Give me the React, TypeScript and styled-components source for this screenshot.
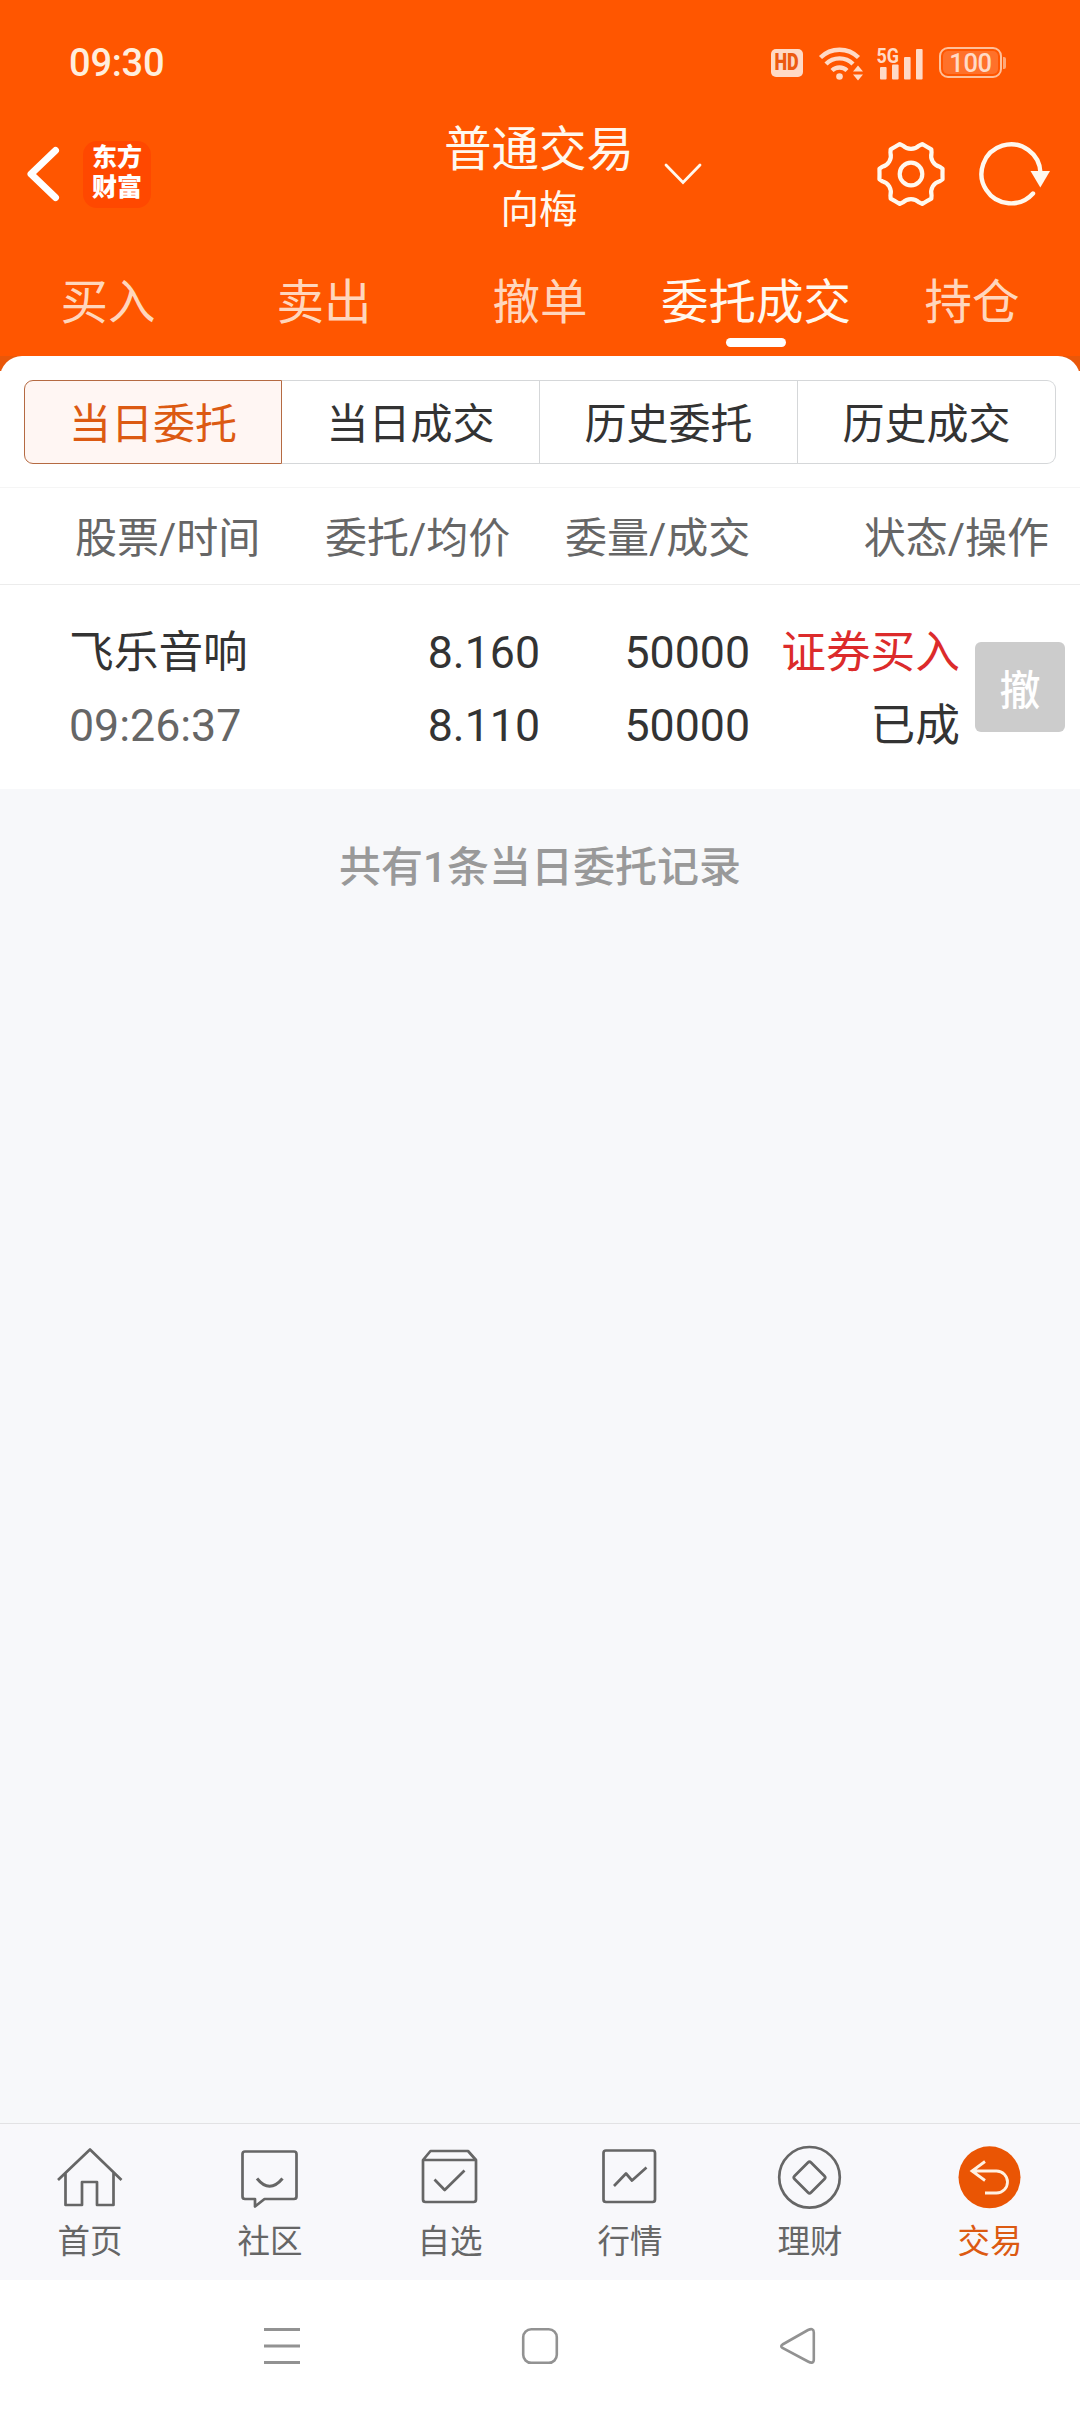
import React from 'react';
import styled, { createGlobalStyle, css } from 'styled-components';

const GlobalStyle = createGlobalStyle`
  *, *::before, *::after { box-sizing: border-box; }
  body {
    margin: 0;
    background: #f7f8fa;
    font-family: Roboto, "Noto Sans CJK SC", sans-serif;
    color: #333;
  }
  svg { display: block; flex: none; }
`;

const Screen = styled.div`
  width: 1080px;
  height: 2412px;
  display: flex;
  flex-direction: column;
  overflow: hidden;
  background: #f7f8fa;
`;

const Header = styled.header`
  background: #ff5600;
  color: #fff8ee;
  flex: none;
`;

/* ---------- status bar ---------- */

const StatusBar = styled.div`
  height: 125px;
  padding: 0 74px 0 69px;
  display: flex;
  align-items: center;
  justify-content: space-between;
`;

const Clock = styled.span`
  font-size: 38px;
  line-height: 44px;
  font-weight: 500;
  letter-spacing: -0.2px;
  color: #ffeedd;
`;

const StatusIcons = styled.div`
  display: flex;
  align-items: center;
  color: #ffdac6;
`;

const HdBadge = styled.span`
  width: 32px;
  height: 28px;
  margin-right: 15px;
  border-radius: 5px;
  background: currentColor;
  display: flex;
  align-items: center;
  justify-content: center;

  span {
    color: #ec5a10;
    font-size: 23px;
    line-height: 28px;
    font-weight: 900;
    transform: scaleX(0.78);
  }
`;

const Battery = styled.span`
  width: 63px;
  height: 31px;
  margin-left: 15px;
  border: 2.5px solid #ffc09a;
  border-radius: 9px;
  padding: 2px;
  display: flex;
`;

const BatteryFill = styled.span`
  flex: 1;
  border-radius: 5px;
  background: #ff712a;
  display: flex;
  align-items: center;
  justify-content: center;
  color: #ffdac6;
  font-size: 25.5px;
  line-height: 24px;
  font-weight: 500;
  letter-spacing: -0.4px;
`;

const BatteryNub = styled.span`
  width: 3px;
  height: 12px;
  margin-left: 1px;
  border-radius: 0 2px 2px 0;
  background: #ffa878;
`;

/* ---------- title bar ---------- */

const TitleBar = styled.div`
  height: 98px;
  padding: 0 28px 0 26px;
  display: grid;
  grid-template-columns: 1fr auto 1fr;
  grid-template-rows: 98px;
  align-items: center;
`;

const TitleLeft = styled.div`
  display: flex;
  align-items: center;
  gap: 23px;
`;

const Logo = styled.div`
  width: 68px;
  height: 67px;
  padding-bottom: 2px;
  border-radius: 14px;
  background: #ff4800;
  color: #fff;
  display: flex;
  flex-direction: column;
  align-items: center;
  justify-content: center;
  font-size: 25px;
  line-height: 30px;
  font-weight: 900;
`;

const TitleCenter = styled.div`
  height: 98px;
  display: flex;
  align-items: center;
  gap: 30px;
`;

const Account = styled.div`
  display: flex;
  flex-direction: column;
  align-items: center;
  margin: 9px 0 0 68px;
`;

const AccountType = styled.div`
  font-size: 47.5px;
  line-height: 62px;
`;

const AccountName = styled.div`
  font-size: 38.5px;
  line-height: 57px;
`;

const TitleRight = styled.div`
  display: flex;
  align-items: center;
  justify-content: flex-end;
  gap: 32px;
`;

/* ---------- main tabs ---------- */

const Tabs = styled.nav`
  height: 133px;
  display: grid;
  grid-template-columns: repeat(5, 1fr);
`;

const Tab = styled.div<{ $active?: boolean }>`
  display: flex;
  flex-direction: column;
  align-items: center;
  justify-content: flex-end;
  padding-bottom: 9px;
  gap: 3px;
  font-size: 47.5px;
  line-height: 64px;
  white-space: nowrap;
  color: ${(p) => (p.$active ? '#fff8ee' : '#ffd6bd')};

  &::after {
    content: '';
    width: 60px;
    height: 9px;
    border-radius: 5px;
    background: ${(p) => (p.$active ? '#fff' : 'transparent')};
  }
`;

/* ---------- order panel ---------- */

const PanelBack = styled.div`
  background: linear-gradient(#e95709 15px, #fff 15px);
  flex: none;
`;

const Panel = styled.section`
  background: #fff;
  border-radius: 22px 22px 0 0;
  padding-top: 24px;
`;

const Segments = styled.div`
  margin: 0 24px 23px;
  height: 84px;
  display: grid;
  grid-template-columns: repeat(4, 1fr);
`;

const Segment = styled.div<{ $active?: boolean }>`
  display: flex;
  align-items: center;
  justify-content: center;
  padding-top: 6px;
  font-size: 42px;
  line-height: 60px;
  border: 1px solid #d5d7d9;
  border-left-width: 0;

  &:first-child {
    border-left-width: 1px;
    border-radius: 9px 0 0 9px;
  }
  &:last-child {
    border-radius: 0 9px 9px 0;
  }
  ${(p) =>
    p.$active &&
    css`
      color: #dc5a12;
      background: #fff6f3;
      border-color: #b56a42;
    `}
`;

const TableHead = styled.div`
  height: 98px;
  border-top: 1px solid #f5f5f5;
  border-bottom: 1px solid #ececec;
  padding: 6px 31px 0 75px;
  display: grid;
  grid-template-columns: 250px 186px 1fr auto;
  align-items: center;
  font-size: 42px;
  line-height: 60px;
  color: #666;

  span:nth-child(3) { padding-left: 54px; }
`;

const OrderRow = styled.div`
  height: 204px;
  display: grid;
  grid-template-columns: 300px 240px 210px 210px 1fr;
  align-items: center;
`;

const Cell = styled.div<{ $align?: 'left' | 'right' }>`
  display: flex;
  flex-direction: column;
  padding-top: 5px;
  padding-left: ${(p) => (p.$align === 'left' ? '69px' : '0')};
  text-align: ${(p) => p.$align ?? 'right'};
  font-size: 44.7px;
`;

const Line = styled.span<{ $tone?: 'buy' | 'muted' }>`
  line-height: 73px;
  height: 73px;
  white-space: nowrap;
  color: ${(p) => (p.$tone === 'buy' ? '#dc2b2b' : p.$tone === 'muted' ? '#666' : '#333')};
`;

const CancelButton = styled.button`
  width: 90px;
  height: 90px;
  margin-left: 15px;
  padding: 0;
  border: 0;
  border-radius: 6px;
  background: #ccc;
  color: #fff;
  font: 500 41px/90px "Noto Sans CJK SC", sans-serif;
`;

const Summary = styled.p`
  margin: 0;
  padding-top: 49px;
  flex: 1;
  text-align: center;
  font-size: 42px;
  line-height: 60px;
  font-weight: 500;
  color: #999;
`;

/* ---------- bottom bars ---------- */

const BottomNav = styled.nav`
  height: 157px;
  flex: none;
  border-top: 1px solid #e2e2e4;
  background: #f8f8fb;
  display: grid;
  grid-template-columns: repeat(6, 1fr);
`;

const NavItem = styled.div<{ $active?: boolean }>`
  display: flex;
  flex-direction: column;
  align-items: center;
  padding-top: 19px;
  font-size: 32.5px;
  line-height: 46px;
  color: ${(p) => (p.$active ? '#dc5a12' : '#666')};

  svg { margin-bottom: 10px; }
`;

const SystemNav = styled.div`
  height: 132px;
  flex: none;
  background: #fff;
  padding: 0 261px;
  display: flex;
  align-items: center;
  justify-content: space-between;
  color: #929292;
`;

/* ---------- drawings ---------- */

const Wifi = () => (
  <svg width="58" height="36" viewBox="818 43 58 36" fill="none" stroke="currentColor" strokeWidth="4.4">
    <path d="M820.5 55.500A27 27 0 0 1 858.500 55.500M826 62A19 19 0 0 1 853 62M832 68.500A11 11 0 0 1 847 68.500" />
    <circle cx="839.5" cy="74.5" r="3.3" fill="currentColor" stroke="none" />
    <path d="M853 69.500L858 63.500L863 69.500ZM853 72.500L858 78.500L863 72.500Z" fill="currentColor" stroke="none" />
  </svg>
);

const Signal = () => (
  <svg width="48" height="36" viewBox="876 43 48 36" fill="currentColor">
    <text x="876.5" y="61" fontSize="21" fontWeight="700" textLength="22.5" lengthAdjust="spacingAndGlyphs">5G</text>
    <rect x="880" y="65" width="6.6" height="12.5" rx="1" />
    <rect x="892" y="62.5" width="6.6" height="15" rx="1" />
    <rect x="904" y="55" width="6.6" height="22.5" rx="1" />
    <rect x="916" y="47" width="6.6" height="30.5" rx="1" />
  </svg>
);

const BackIcon = () => (
  <svg width="34" height="58" viewBox="26 146 34 58" fill="none" stroke="#fff" strokeWidth="7" strokeLinecap="round" strokeLinejoin="round">
    <path d="M55.500 151.500L31 175L55.500 198.500" />
  </svg>
);

const ChevronDown = () => (
  <svg width="38" height="22" viewBox="0 0 38 22" fill="none" stroke="currentColor" strokeWidth="2.8" strokeLinecap="round">
    <path d="M2 2L19 19.500L36 2" />
  </svg>
);

const polar = (r: number, deg: number) => {
  const a = (deg * Math.PI) / 180;
  return `${(34 + r * Math.cos(a)).toFixed(2)} ${(34 + r * Math.sin(a)).toFixed(2)}`;
};

const gearPath =
  [0, 60, 120, 180, 240, 300]
    .map(
      (t, i) =>
        `${i ? 'L' : 'M'}${polar(29.6, t - 14)}L${polar(32, t - 9.5)}Q${polar(31.4, t)} ${polar(32, t + 9.5)}L${polar(29.6, t + 14)}A11.5 11.5 0 0 0 ${polar(29.6, t + 46)}`,
    )
    .join('') + 'Z';

const GearIcon = () => (
  <svg width="68" height="68" viewBox="0 0 68 68" fill="none" stroke="currentColor" strokeWidth="4.2" strokeLinejoin="round">
    <path d={gearPath} />
    <circle cx="34" cy="34" r="11.3" />
  </svg>
);

const RefreshIcon = () => (
  <svg width="75" height="68" viewBox="977 140 75 68" fill="none" stroke="currentColor" strokeWidth="4.4" strokeLinecap="round">
    <path d="M1033 193.500A29.500 29.500 0 1 1 1040.500 173" />
    <path d="M1030.500 171H1050L1040.300 187.500Z" fill="currentColor" stroke="none" />
  </svg>
);

const NavSvg = ({ cx, children }: { cx: number; children: React.ReactNode }) => (
  <svg width="68" height="66" viewBox={`${cx - 34} 2143 68 66`} fill="none" stroke="currentColor" strokeWidth="2.7" strokeLinejoin="round">
    {children}
  </svg>
);

const navItems = [
  {
    label: '首页',
    icon: (
      <NavSvg cx={90}>
        <path d="M58 2180L90 2149.500L121.500 2180M65.500 2173V2205H82V2182H97V2205H113.500V2173" />
      </NavSvg>
    ),
  },
  {
    label: '社区',
    icon: (
      <NavSvg cx={270}>
        <path d="M255 2199H245Q242.500 2199 242.500 2196.500V2154Q242.500 2151.500 245 2151.500H294Q296.500 2151.500 296.500 2154V2196.500Q296.500 2199 294 2199H264.500L255 2206.500Z" />
        <path d="M257 2178.500Q269.500 2194 282.500 2178.500" strokeWidth="3" />
      </NavSvg>
    ),
  },
  {
    label: '自选',
    icon: (
      <NavSvg cx={450}>
        <path d="M423 2160L430.500 2151H468L476 2160V2199.500Q476 2202 473.500 2202H425.500Q423 2202 423 2199.500ZM423 2160H476M434.500 2179.500L444.700 2190L464.500 2170.500" />
      </NavSvg>
    ),
  },
  {
    label: '行情',
    icon: (
      <NavSvg cx={630}>
        <rect x="603.500" y="2150.500" width="51.500" height="51.500" rx="2.500" />
        <path d="M614 2186L626 2173.500L632 2180.500L646.500 2167.500" />
      </NavSvg>
    ),
  },
  {
    label: '理财',
    icon: (
      <NavSvg cx={810}>
        <circle cx="809.500" cy="2177.300" r="30.300" />
        <path d="M808 2162.500Q809.500 2161 811 2162.500L824.500 2176Q826 2177.500 824.500 2179L811 2192.500Q809.500 2194 808 2192.500L794.500 2179Q793 2177.500 794.500 2176Z" />
      </NavSvg>
    ),
  },
  {
    label: '交易',
    active: true,
    icon: (
      <NavSvg cx={990}>
        <circle cx="989.500" cy="2177.300" r="31" fill="#ea5504" stroke="none" />
        <path d="M985 2161.500L972 2171L985 2180.500M972 2171H996.500A11 11 0 0 1 996.500 2193H985" stroke="#fff1e2" strokeWidth="2.800" strokeLinejoin="miter" />
      </NavSvg>
    ),
  },
];

const tabs = ['买入', '卖出', '撤单', '委托成交', '持仓'];
const segments = ['当日委托', '当日成交', '历史委托', '历史成交'];
const heads = ['股票/时间', '委托/均价', '委量/成交', '状态/操作'];

export default function App() {
  return (
    <Screen>
      <GlobalStyle />
      <Header>
        <StatusBar>
          <Clock>09:30</Clock>
          <StatusIcons>
            <HdBadge><span>HD</span></HdBadge>
            <Wifi />
            <Signal />
            <Battery><BatteryFill>100</BatteryFill></Battery>
            <BatteryNub />
          </StatusIcons>
        </StatusBar>
        <TitleBar>
          <TitleLeft>
            <BackIcon />
            <Logo>
              <span>东方</span>
              <span>财富</span>
            </Logo>
          </TitleLeft>
          <TitleCenter>
            <Account>
              <AccountType>普通交易</AccountType>
              <AccountName>向梅</AccountName>
            </Account>
            <ChevronDown />
          </TitleCenter>
          <TitleRight>
            <GearIcon />
            <RefreshIcon />
          </TitleRight>
        </TitleBar>
        <Tabs>
          {tabs.map((t) => (
            <Tab key={t} $active={t === '委托成交'}>{t}</Tab>
          ))}
        </Tabs>
      </Header>

      <PanelBack>
        <Panel>
          <Segments>
            {segments.map((s, i) => (
              <Segment key={s} $active={i === 0}>{s}</Segment>
            ))}
          </Segments>
          <TableHead>
            {heads.map((h) => (
              <span key={h}>{h}</span>
            ))}
          </TableHead>
          <OrderRow>
            <Cell $align="left">
              <Line>飞乐音响</Line>
              <Line $tone="muted">09:26:37</Line>
            </Cell>
            <Cell>
              <Line>8.160</Line>
              <Line>8.110</Line>
            </Cell>
            <Cell>
              <Line>50000</Line>
              <Line>50000</Line>
            </Cell>
            <Cell>
              <Line $tone="buy">证券买入</Line>
              <Line>已成</Line>
            </Cell>
            <CancelButton>撤</CancelButton>
          </OrderRow>
        </Panel>
      </PanelBack>

      <Summary>共有1条当日委托记录</Summary>

      <BottomNav>
        {navItems.map((n) => (
          <NavItem key={n.label} $active={n.active}>
            {n.icon}
            {n.label}
          </NavItem>
        ))}
      </BottomNav>

      <SystemNav>
        <svg width="42" height="42" viewBox="261 2325 42 42" stroke="currentColor" strokeWidth="2.800">
          <path d="M264 2329.500H300M264 2346H300M264 2362.500H300" />
        </svg>
        <svg width="42" height="42" viewBox="519 2325 42 42" fill="none" stroke="currentColor" strokeWidth="2.600">
          <rect x="523.200" y="2329.300" width="33.600" height="33.500" rx="8" />
        </svg>
        <svg width="42" height="42" viewBox="777 2325 42 42" fill="none" stroke="currentColor" strokeWidth="2.600">
          <path d="M782.500 2344.500L808 2330Q813.800 2327.500 813.800 2332.500V2359.500Q813.800 2364.500 808 2361.500L782.500 2348Q780 2346.200 782.500 2344.500Z" />
        </svg>
      </SystemNav>
    </Screen>
  );
}
